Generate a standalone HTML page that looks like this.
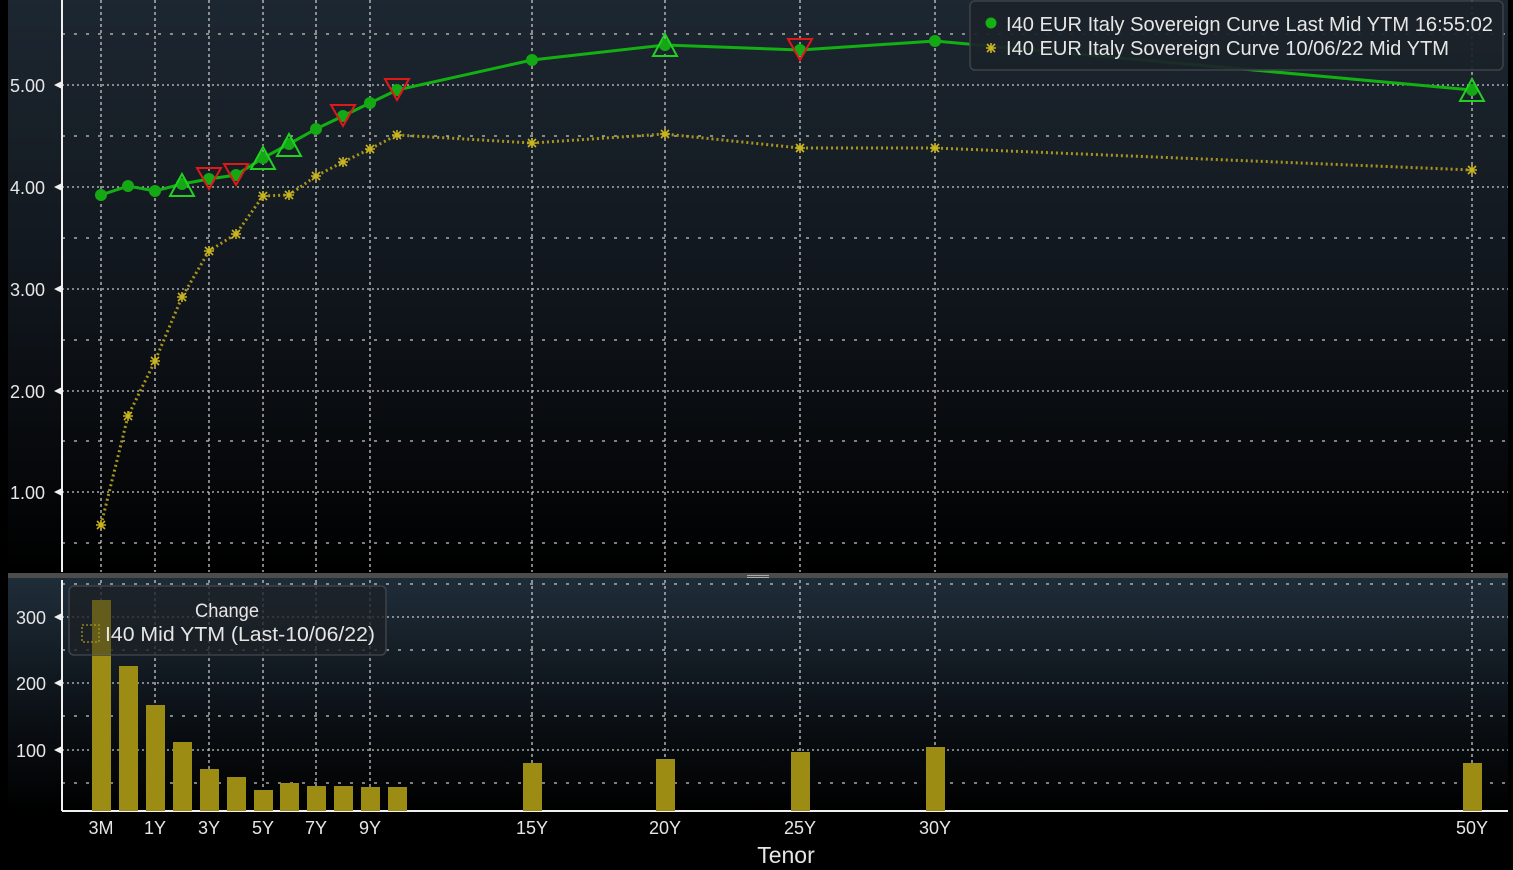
<!DOCTYPE html>
<html><head><meta charset="utf-8"><style>
html,body{margin:0;padding:0;background:#000;width:1513px;height:870px;overflow:hidden}
svg{display:block}
text{font-family:"Liberation Sans Narrow","Liberation Sans",sans-serif;fill:#e6e6e6}
</style></head><body>
<svg width="1513" height="870" viewBox="0 0 1513 870" xmlns="http://www.w3.org/2000/svg">
<defs>
<linearGradient id="g1" x1="0" y1="0" x2="0" y2="1">
<stop offset="0" stop-color="#1d2731"/><stop offset="0.55" stop-color="#0f141a"/><stop offset="1" stop-color="#000"/>
</linearGradient>
<linearGradient id="g2" x1="0" y1="0" x2="0" y2="1">
<stop offset="0" stop-color="#1f2d39"/><stop offset="0.6" stop-color="#0b1015"/><stop offset="1" stop-color="#000"/>
</linearGradient>
</defs>
<rect x="0" y="0" width="1513" height="870" fill="#000"/>
<rect x="8" y="0" width="1500" height="574" fill="url(#g1)"/>
<rect x="8" y="578" width="1500" height="234" fill="url(#g2)"/>
<rect x="8" y="573" width="1500" height="5" fill="#4c4c4c"/>
<rect x="747" y="575" width="22" height="1" fill="#aaa"/><rect x="747" y="577" width="22" height="1" fill="#aaa"/>

<g stroke="#c8c8c8" stroke-width="1.3" fill="none">
<g stroke-dasharray="2,3">
<line x1="62" y1="85" x2="1508" y2="85"/><line x1="62" y1="187" x2="1508" y2="187"/><line x1="62" y1="289" x2="1508" y2="289"/><line x1="62" y1="391" x2="1508" y2="391"/><line x1="62" y1="492" x2="1508" y2="492"/>
<line x1="62" y1="617" x2="1508" y2="617"/><line x1="62" y1="683" x2="1508" y2="683"/><line x1="62" y1="750" x2="1508" y2="750"/>
</g>
<g stroke-dasharray="3,9">
<line x1="62" y1="34" x2="1508" y2="34"/><line x1="62" y1="136" x2="1508" y2="136"/><line x1="62" y1="238" x2="1508" y2="238"/><line x1="62" y1="340" x2="1508" y2="340"/><line x1="62" y1="441" x2="1508" y2="441"/><line x1="62" y1="543" x2="1508" y2="543"/>
<line x1="62" y1="584" x2="1508" y2="584"/><line x1="62" y1="650" x2="1508" y2="650"/><line x1="62" y1="716" x2="1508" y2="716"/><line x1="62" y1="783" x2="1508" y2="783"/>
</g>
<g stroke-dasharray="3,3">
<line x1="101" y1="0" x2="101" y2="572"/><line x1="155" y1="0" x2="155" y2="572"/><line x1="209" y1="0" x2="209" y2="572"/><line x1="263" y1="0" x2="263" y2="572"/><line x1="316" y1="0" x2="316" y2="572"/><line x1="370" y1="0" x2="370" y2="572"/><line x1="532" y1="0" x2="532" y2="572"/><line x1="665" y1="0" x2="665" y2="572"/><line x1="800" y1="0" x2="800" y2="572"/><line x1="935" y1="0" x2="935" y2="572"/><line x1="1472" y1="0" x2="1472" y2="572"/>
<line x1="101" y1="580" x2="101" y2="810"/><line x1="155" y1="580" x2="155" y2="810"/><line x1="209" y1="580" x2="209" y2="810"/><line x1="263" y1="580" x2="263" y2="810"/><line x1="316" y1="580" x2="316" y2="810"/><line x1="370" y1="580" x2="370" y2="810"/><line x1="532" y1="580" x2="532" y2="810"/><line x1="665" y1="580" x2="665" y2="810"/><line x1="800" y1="580" x2="800" y2="810"/><line x1="935" y1="580" x2="935" y2="810"/><line x1="1472" y1="580" x2="1472" y2="810"/>
</g>
</g>
<g stroke="#f0f0f0" stroke-width="2" fill="none">
<line x1="62" y1="0" x2="62" y2="572"/>
<line x1="62" y1="580" x2="62" y2="811"/>
<line x1="62" y1="811" x2="1508" y2="811"/>
</g>
<g fill="#f0f0f0">
<polygon points="54,85 62,81 62,89"/><polygon points="54,187 62,183 62,191"/><polygon points="54,289 62,285 62,293"/><polygon points="54,391 62,387 62,395"/><polygon points="54,492 62,488 62,496"/>
<polygon points="54,617 62,613 62,621"/><polygon points="54,683 62,679 62,687"/><polygon points="54,750 62,746 62,754"/>
</g>
<g font-size="18">
<text x="10" y="92">5.00</text><text x="10" y="194">4.00</text><text x="10" y="296">3.00</text><text x="10" y="398">2.00</text><text x="10" y="499">1.00</text>
<text x="16" y="624">300</text><text x="16" y="690">200</text><text x="16" y="757">100</text>
</g>
<g font-size="18" text-anchor="middle">
<text x="101" y="834">3M</text><text x="155" y="834">1Y</text><text x="209" y="834">3Y</text><text x="263" y="834">5Y</text><text x="316" y="834">7Y</text><text x="370" y="834">9Y</text><text x="532" y="834">15Y</text><text x="665" y="834">20Y</text><text x="800" y="834">25Y</text><text x="935" y="834">30Y</text><text x="1472" y="834">50Y</text>
<text x="786" y="863" font-size="23" font-family="Liberation Sans,sans-serif">Tenor</text>
</g>

<g fill="#9c8c14">
<rect x="92" y="600" width="19" height="211"/><rect x="119" y="666" width="19" height="145"/><rect x="146" y="705" width="19" height="106"/><rect x="173" y="742" width="19" height="69"/><rect x="200" y="769" width="19" height="42"/><rect x="227" y="777" width="19" height="34"/><rect x="254" y="790" width="19" height="21"/><rect x="280" y="783" width="19" height="28"/><rect x="307" y="786" width="19" height="25"/><rect x="334" y="786" width="19" height="25"/><rect x="361" y="787" width="19" height="24"/><rect x="388" y="787" width="19" height="24"/>
<rect x="523" y="763" width="19" height="48"/><rect x="656" y="759" width="19" height="52"/><rect x="791" y="752" width="19" height="59"/><rect x="926" y="747" width="19" height="64"/><rect x="1463" y="763" width="19" height="48"/>
</g>

<polyline fill="none" stroke="#a8961c" stroke-width="3" stroke-dasharray="2,3" points="101,525 128,416 155,361 182,297 209,251 236,234 263,196 289,195 316,176 343,162 370,149 397,135 532,143 665,134 800,148 935,148 1472,170"/>
<g stroke="#c8b420" stroke-width="1.6" fill="none">
<path transform="translate(101,525)" d="M-5,0H5M0,-5V5M-4,-4L4,4M-4,4L4,-4"/>
<path transform="translate(128,416)" d="M-5,0H5M0,-5V5M-4,-4L4,4M-4,4L4,-4"/>
<path transform="translate(155,361)" d="M-5,0H5M0,-5V5M-4,-4L4,4M-4,4L4,-4"/>
<path transform="translate(182,297)" d="M-5,0H5M0,-5V5M-4,-4L4,4M-4,4L4,-4"/>
<path transform="translate(209,251)" d="M-5,0H5M0,-5V5M-4,-4L4,4M-4,4L4,-4"/>
<path transform="translate(236,234)" d="M-5,0H5M0,-5V5M-4,-4L4,4M-4,4L4,-4"/>
<path transform="translate(263,196)" d="M-5,0H5M0,-5V5M-4,-4L4,4M-4,4L4,-4"/>
<path transform="translate(289,195)" d="M-5,0H5M0,-5V5M-4,-4L4,4M-4,4L4,-4"/>
<path transform="translate(316,176)" d="M-5,0H5M0,-5V5M-4,-4L4,4M-4,4L4,-4"/>
<path transform="translate(343,162)" d="M-5,0H5M0,-5V5M-4,-4L4,4M-4,4L4,-4"/>
<path transform="translate(370,149)" d="M-5,0H5M0,-5V5M-4,-4L4,4M-4,4L4,-4"/>
<path transform="translate(397,135)" d="M-5,0H5M0,-5V5M-4,-4L4,4M-4,4L4,-4"/>
<path transform="translate(532,143)" d="M-5,0H5M0,-5V5M-4,-4L4,4M-4,4L4,-4"/>
<path transform="translate(665,134)" d="M-5,0H5M0,-5V5M-4,-4L4,4M-4,4L4,-4"/>
<path transform="translate(800,148)" d="M-5,0H5M0,-5V5M-4,-4L4,4M-4,4L4,-4"/>
<path transform="translate(935,148)" d="M-5,0H5M0,-5V5M-4,-4L4,4M-4,4L4,-4"/>
<path transform="translate(1472,170)" d="M-5,0H5M0,-5V5M-4,-4L4,4M-4,4L4,-4"/>
</g>

<polyline fill="none" stroke="#13b013" stroke-width="3" points="101,195 128,186 155,191 182,184 209,179 236,175 263,158 289,144 316,129 343,116 370,103 397,90 532,60 665,45 800,50 935,41 1472,90"/>
<g fill="#14a814">
<circle cx="101" cy="195" r="6"/><circle cx="128" cy="186" r="6"/><circle cx="155" cy="191" r="6"/><circle cx="182" cy="184" r="6"/><circle cx="209" cy="179" r="6"/><circle cx="236" cy="175" r="6"/><circle cx="263" cy="158" r="6"/><circle cx="289" cy="144" r="6"/><circle cx="316" cy="129" r="6"/><circle cx="343" cy="116" r="6"/><circle cx="370" cy="103" r="6"/><circle cx="397" cy="90" r="6"/><circle cx="532" cy="60" r="6"/><circle cx="665" cy="45" r="6"/><circle cx="800" cy="50" r="6"/><circle cx="935" cy="41" r="6"/><circle cx="1472" cy="90" r="6"/>
</g>
<g fill="none" stroke="#22d022" stroke-width="2">
<polygon points="182,174 194,196 170,196"/>
<polygon points="263,147 275,169 251,169"/>
<polygon points="289,134 301,156 277,156"/>
<polygon points="665,34 677,56 653,56"/>
<polygon points="1472,79 1484,101 1460,101"/>
</g>
<g fill="none" stroke="#e01818" stroke-width="2">
<polygon points="197,168 221,168 209,189"/>
<polygon points="224,164 248,164 236,185"/>
<polygon points="331,105 355,105 343,126"/>
<polygon points="385,79 409,79 397,100"/>
<polygon points="788,39 812,39 800,60"/>
</g>

<rect x="970" y="1" width="533" height="69" rx="5" fill="#1b2229" fill-opacity="0.93" stroke="#3c4248" stroke-width="1.5"/>
<circle cx="991" cy="23" r="5.5" fill="#14b014"/>
<path transform="translate(991,48)" d="M-5,0H5M0,-5V5M-4,-4L4,4M-4,4L4,-4" stroke="#c8b420" stroke-width="1.6"/>
<text x="1006" y="31" font-size="20" textLength="487" lengthAdjust="spacingAndGlyphs">I40 EUR Italy Sovereign Curve Last Mid YTM 16:55:02</text>
<text x="1006" y="55" font-size="20" textLength="443" lengthAdjust="spacingAndGlyphs">I40 EUR Italy Sovereign Curve 10/06/22 Mid YTM</text>

<rect x="69" y="586" width="317" height="69" rx="5" fill="#1c2126" fill-opacity="0.8" stroke="#3c4248" stroke-width="1.5"/>
<rect x="92" y="600" width="19" height="55" fill="#9c8c14" fill-opacity="0.45"/>
<text x="227" y="617" font-size="19" text-anchor="middle" textLength="64" lengthAdjust="spacingAndGlyphs">Change</text>
<rect x="82" y="625" width="17" height="17" fill="none" stroke="#a8961c" stroke-width="1.3" stroke-dasharray="2,2"/>
<text x="105" y="641" font-size="20" textLength="270" lengthAdjust="spacingAndGlyphs">I40 Mid YTM (Last-10/06/22)</text>
</svg>
</body></html>
